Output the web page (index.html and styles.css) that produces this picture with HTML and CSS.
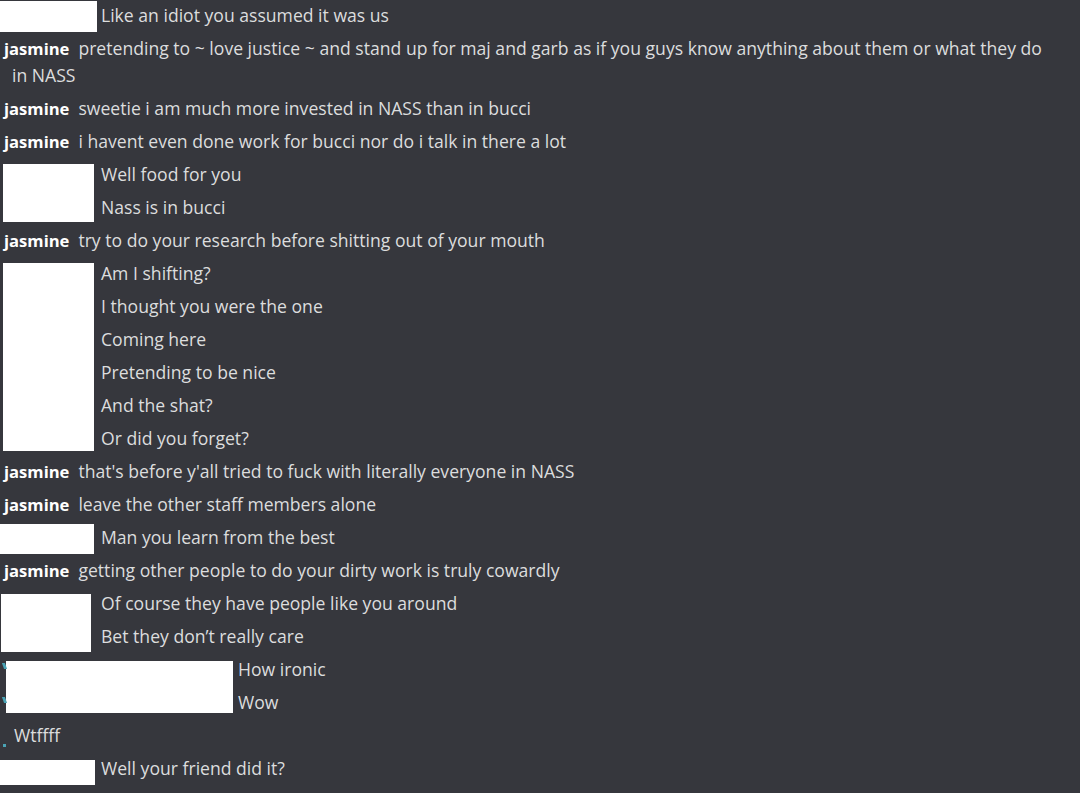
FILE: index.html
```html
<!DOCTYPE html>
<html lang="en">
<head>
    <meta charset="UTF-8">
    <meta name="viewport" content="width=device-width, initial-scale=1.0">
    <title>Chat log</title>
    <link rel="stylesheet" href="styles.css">
</head>
<body>
    <div class="chat">
        <div class="group">
            <div class="author"><span class="redact r1"></span></div>
            <div class="lines">
                <p class="line">Like an idiot you assumed it was us</p>
            </div>
        </div>

        <p class="msg"><span class="name">jasmine</span>pretending to ~ love justice ~ and stand up for maj and garb as if you guys know anything about them or what they do in NASS</p>
        <p class="msg"><span class="name">jasmine</span>sweetie i am much more invested in NASS than in bucci</p>
        <p class="msg"><span class="name">jasmine</span>i havent even done work for bucci nor do i talk in there a lot</p>

        <div class="group">
            <div class="author"><span class="redact r2"></span></div>
            <div class="lines">
                <p class="line">Well food for you</p>
                <p class="line">Nass is in bucci</p>
            </div>
        </div>

        <p class="msg"><span class="name">jasmine</span>try to do your research before shitting out of your mouth</p>

        <div class="group">
            <div class="author"><span class="redact r3"></span></div>
            <div class="lines">
                <p class="line">Am I shifting?</p>
                <p class="line">I thought you were the one</p>
                <p class="line">Coming here</p>
                <p class="line">Pretending to be nice</p>
                <p class="line">And the shat?</p>
                <p class="line">Or did you forget?</p>
            </div>
        </div>

        <p class="msg"><span class="name">jasmine</span>that's before y'all tried to fuck with literally everyone in NASS</p>
        <p class="msg"><span class="name">jasmine</span>leave the other staff members alone</p>

        <div class="group">
            <div class="author"><span class="redact r4"></span></div>
            <div class="lines">
                <p class="line">Man you learn from the best</p>
            </div>
        </div>

        <p class="msg"><span class="name">jasmine</span>getting other people to do your dirty work is truly cowardly</p>

        <div class="group">
            <div class="author"><span class="redact r5"></span></div>
            <div class="lines">
                <p class="line">Of course they have people like you around</p>
                <p class="line">Bet they don’t really care</p>
            </div>
        </div>

        <div class="group">
            <div class="author wide">
                <div class="ticks">
                    <span class="tick"></span>
                    <span class="tick second"></span>
                </div>
                <span class="redact r6"></span>
            </div>
            <div class="lines">
                <p class="line">How ironic</p>
                <p class="line">Wow</p>
            </div>
        </div>

        <div class="group">
            <div class="author narrow"><span class="dot"></span></div>
            <div class="lines">
                <p class="line">Wtffff</p>
            </div>
        </div>

        <div class="group">
            <div class="author"><span class="redact r7"></span></div>
            <div class="lines">
                <p class="line">Well your friend did it?</p>
            </div>
        </div>
    </div>
</body>
</html>
```

FILE: styles.css
```css
body {
    margin: 0;
    background-color: #36373d;
    color: #dcddde;
    font-family: 'Open Sans', 'Noto Sans', sans-serif;
    font-size: 17.6px;
}

.chat {
    width: 1080px;
    height: 793px;
    overflow: hidden;
}

p {
    margin: 0;
}

/* jasmine's messages, compact style with a hanging wrap */
.msg {
    padding: 2px 30px 4px 12px;
    text-indent: -8px;
    line-height: 27px;
}

.name {
    font-size: 16.6px;
    font-weight: 700;
    color: #ffffff;
    margin-right: 9px;
}

/* messages whose author was blanked out */
.group {
    display: flex;
}

.author {
    flex: none;
    width: 101px;
}

.author.wide {
    width: 238px;
    display: flex;
}

.author.narrow {
    width: 14px;
}

.lines {
    flex: 1;
}

.line {
    padding: 2px 0 4px;
    line-height: 27px;
}

.redact {
    display: block;
    background: #ffffff;
}

.r1 { width: 97px; height: 31px; margin: 1px 0 0 0; }
.r2 { width: 91px; height: 58px; margin: 5px 0 0 3px; }
.r3 { width: 91px; height: 188px; margin: 5px 0 0 3px; }
.r4 { width: 94px; height: 30px; margin: 2px 0 0 0; }
.r5 { width: 90px; height: 58px; margin: 6px 0 0 1px; }
.r6 { width: 227px; height: 52px; margin: 7px 0 0 0; }
.r7 { width: 95px; height: 25px; margin: 7px 0 0 0; }

.ticks {
    width: 6px;
    display: flex;
    flex-direction: column;
    align-items: flex-end;
}

.tick {
    display: block;
    width: 3px;
    height: 6px;
    margin-top: 9px;
    background: #4aa3b5;
    transform: skewX(20deg);
}

.tick.second {
    margin-top: 28px;
}

.dot {
    display: block;
    width: 3px;
    height: 3px;
    margin: 24px 0 0 3px;
    background: #4aa3b5;
}
```
